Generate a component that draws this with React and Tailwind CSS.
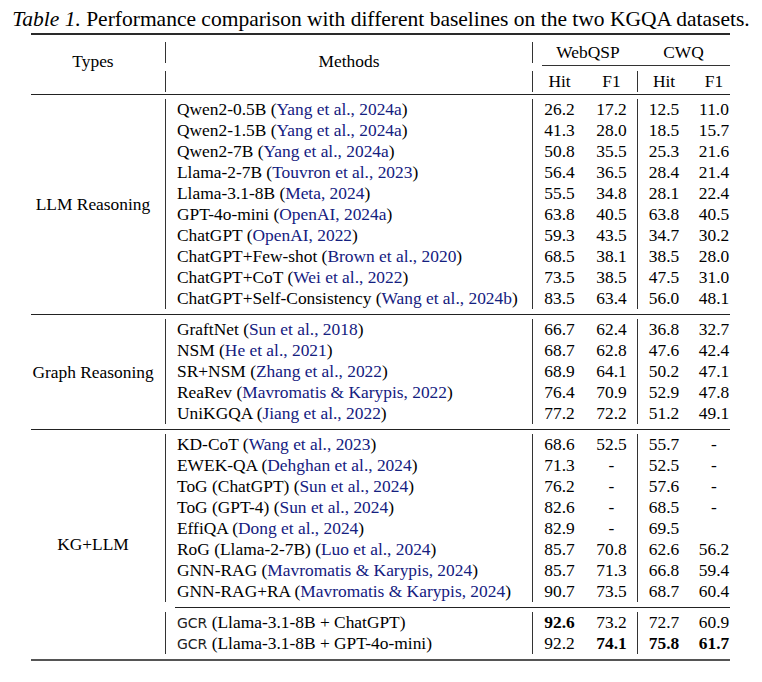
import React from 'react';

const LLM = [
  ['Qwen2-0.5B', 'Yang et al., 2024a', ['26.2', '17.2', '12.5', '11.0']],
  ['Qwen2-1.5B', 'Yang et al., 2024a', ['41.3', '28.0', '18.5', '15.7']],
  ['Qwen2-7B', 'Yang et al., 2024a', ['50.8', '35.5', '25.3', '21.6']],
  ['Llama-2-7B', 'Touvron et al., 2023', ['56.4', '36.5', '28.4', '21.4']],
  ['Llama-3.1-8B', 'Meta, 2024', ['55.5', '34.8', '28.1', '22.4']],
  ['GPT-4o-mini', 'OpenAI, 2024a', ['63.8', '40.5', '63.8', '40.5']],
  ['ChatGPT', 'OpenAI, 2022', ['59.3', '43.5', '34.7', '30.2']],
  ['ChatGPT+Few-shot', 'Brown et al., 2020', ['68.5', '38.1', '38.5', '28.0']],
  ['ChatGPT+CoT', 'Wei et al., 2022', ['73.5', '38.5', '47.5', '31.0']],
  ['ChatGPT+Self-Consistency', 'Wang et al., 2024b', ['83.5', '63.4', '56.0', '48.1']],
];

const GRAPH = [
  ['GraftNet', 'Sun et al., 2018', ['66.7', '62.4', '36.8', '32.7']],
  ['NSM', 'He et al., 2021', ['68.7', '62.8', '47.6', '42.4']],
  ['SR+NSM', 'Zhang et al., 2022', ['68.9', '64.1', '50.2', '47.1']],
  ['ReaRev', 'Mavromatis & Karypis, 2022', ['76.4', '70.9', '52.9', '47.8']],
  ['UniKGQA', 'Jiang et al., 2022', ['77.2', '72.2', '51.2', '49.1']],
];

const KG = [
  ['KD-CoT', 'Wang et al., 2023', ['68.6', '52.5', '55.7', '-']],
  ['EWEK-QA', 'Dehghan et al., 2024', ['71.3', '-', '52.5', '-']],
  ['ToG (ChatGPT)', 'Sun et al., 2024', ['76.2', '-', '57.6', '-']],
  ['ToG (GPT-4)', 'Sun et al., 2024', ['82.6', '-', '68.5', '-']],
  ['EffiQA', 'Dong et al., 2024', ['82.9', '-', '69.5', '']],
  ['RoG (Llama-2-7B)', 'Luo et al., 2024', ['85.7', '70.8', '62.6', '56.2']],
  ['GNN-RAG', 'Mavromatis & Karypis, 2024', ['85.7', '71.3', '66.8', '59.4']],
  ['GNN-RAG+RA', 'Mavromatis & Karypis, 2024', ['90.7', '73.5', '68.7', '60.4']],
];

const OURS = [
  ['Llama-3.1-8B + ChatGPT', ['92.6', '73.2', '72.7', '60.9'], [0]],
  ['Llama-3.1-8B + GPT-4o-mini', ['92.2', '74.1', '75.8', '61.7'], [1, 2, 3]],
];

function Row({ method, vals, bold = [] }) {
  const v = (i) => (bold.includes(i) ? <b>{vals[i]}</b> : vals[i]);
  return (
    <div className="flex h-[21px] leading-[21px]">
      <div className="w-[367px] shrink-0 border-l border-[#333] pl-[11px] whitespace-nowrap">{method}</div>
      <div className="w-[54px] shrink-0 border-l border-[#333] text-center">{v(0)}</div>
      <div className="w-[51px] shrink-0 text-center">{v(1)}</div>
      <div className="w-[53px] shrink-0 border-l border-[#333] text-center">{v(2)}</div>
      <div className="w-[40px] shrink-0 pl-[8px] text-center">{v(3)}</div>
    </div>
  );
}

function Group({ rows }) {
  return (
    <div className="pt-[4px] pb-[5px]">
      {rows.map(([m, c, vals]) => (
        <Row key={m + c} vals={vals}
          method={<>{m} (<span className="text-[#14207f]">{c}</span>)</>} />
      ))}
    </div>
  );
}

function Block({ label, children }) {
  return (
    <div className="flex">
      <div className="w-[134px] shrink-0 pr-[10px] flex items-center justify-center whitespace-nowrap">{label}</div>
      <div className="flex flex-col">{children}</div>
    </div>
  );
}

function VRule() {
  return (
    <div className="w-px shrink-0 flex flex-col pt-[7px] pb-[2px] gap-[8px]">
      <div className="h-[21px] bg-[#333]" />
      <div className="h-[21px] bg-[#333]" />
    </div>
  );
}

export default function App() {
  return (
    <div className="[font-family:Liberation_Serif,serif]">
      <div className="w-[762px] h-[682px] bg-white text-black text-[17.4px]">
        <p className="h-[31px] pt-[9px] leading-[21px] text-[21.5px] text-center whitespace-nowrap">
          <i>Table 1.</i> Performance comparison with different baselines on the two KGQA datasets.
        </p>

        <div className="ml-[31px] w-[699px] mt-[2px]">
          <div className="h-[2px] bg-[#2a2a2a]" />

          {/* header */}
          <div className="flex h-[59px]">
            <div className="w-[134px] shrink-0 pr-[10px] pb-[7px] flex items-center justify-center">Types</div>
            <VRule />
            <div className="w-[366px] shrink-0 pb-[7px] flex items-center justify-center">Methods</div>
            <VRule />
            <div className="w-[197px] shrink-0 flex flex-col">
              <div className="flex h-[30px] pt-[7px] leading-[21px]">
                <div className="w-[104px] pl-[6px] text-center">WebQSP</div>
                <div className="w-[93px] text-center">CWQ</div>
              </div>
              <div className="h-px ml-[9px] bg-[#333]" />
              <div className="flex pt-[5px] pb-[2px] leading-[21px]">
                <div className="w-[53px] text-center">Hit</div>
                <div className="w-[51px] text-center">F1</div>
                <div className="w-[53px] border-l border-[#333] text-center">Hit</div>
                <div className="w-[40px] pl-[8px] text-center">F1</div>
              </div>
            </div>
          </div>

          <div className="h-px bg-[#222]" />
          <Block label="LLM Reasoning"><Group rows={LLM} /></Block>
          <div className="h-px bg-[#222]" />
          <Block label="Graph Reasoning"><Group rows={GRAPH} /></Block>
          <div className="h-px bg-[#222]" />
          <Block label="KG+LLM">
            <Group rows={KG} />
            <div className="h-px ml-[10px] bg-[#222]" />
            <div className="pt-[4px] pb-[5px]">
              {OURS.map(([m, vals, bold]) => (
                <Row key={m} vals={vals} bold={bold}
                  method={<><span className="[font-family:DejaVu_Sans,sans-serif] text-[14px] text-[#222]">GCR</span> ({m})</>} />
              ))}
            </div>
          </Block>
          <div className="h-[2px] bg-[#555]" />
        </div>
      </div>
    </div>
  );
}
